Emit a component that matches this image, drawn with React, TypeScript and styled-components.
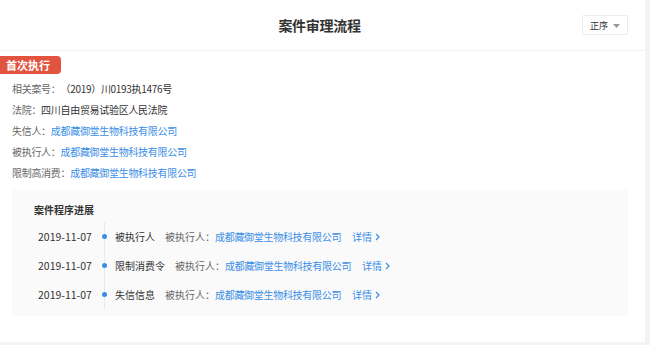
import React from 'react';
import styled, { createGlobalStyle } from 'styled-components';

const GlobalStyle = createGlobalStyle`
    body {
        margin: 0;
        background: #f2f3f5;
        font-family: "Noto Sans CJK SC", "Liberation Sans", sans-serif;
    }
`;

interface IRecord {
    date: string;
    event: string;
    party: string;
}

const records: IRecord[] = [
    { date: '2019-11-07', event: '被执行人', party: '成都藏御堂生物科技有限公司' },
    { date: '2019-11-07', event: '限制消费令', party: '成都藏御堂生物科技有限公司' },
    { date: '2019-11-07', event: '失信信息', party: '成都藏御堂生物科技有限公司' },
];

const Chevron = (): JSX.Element => (
    <svg width="5" height="8" viewBox="0 0 5 8">
        <path d="M1 1l3 3-3 3" fill="none" stroke="#3a8ee6" strokeWidth="1.2" />
    </svg>
);

const Caret = (): JSX.Element => (
    <svg width="7" height="4" viewBox="0 0 7 4">
        <path d="M0 0h7L3.5 4z" fill="#999" />
    </svg>
);

export default function App(): JSX.Element {
    return (
        <>
            <GlobalStyle />
            <Panel>
                <Header>
                    <span />
                    <Title>案件审理流程</Title>
                    <SortButton>
                        正序 <Caret />
                    </SortButton>
                </Header>
                <Tag>首次执行</Tag>
                <InfoList>
                    <InfoRow>
                        <Label>相关案号：</Label>
                        <Value>（2019）川0193执1476号</Value>
                    </InfoRow>
                    <InfoRow>
                        <Label>法院：</Label>
                        <Value>四川自由贸易试验区人民法院</Value>
                    </InfoRow>
                    <InfoRow>
                        <Label>失信人：</Label>
                        <Link>成都藏御堂生物科技有限公司</Link>
                    </InfoRow>
                    <InfoRow>
                        <Label>被执行人：</Label>
                        <Link>成都藏御堂生物科技有限公司</Link>
                    </InfoRow>
                    <InfoRow>
                        <Label>限制高消费：</Label>
                        <Link>成都藏御堂生物科技有限公司</Link>
                    </InfoRow>
                </InfoList>
                <ProgressBox>
                    <ProgressTitle>案件程序进展</ProgressTitle>
                    <Timeline>
                        {records.map((r) => (
                            <TimelineRow key={r.event}>
                                <DateCell>{r.date}</DateCell>
                                <DotCell>
                                    <Dot />
                                </DotCell>
                                <EventName>{r.event}</EventName>
                                <Label>被执行人：</Label>
                                <Link>{r.party}</Link>
                                <Detail>
                                    详情 <Chevron />
                                </Detail>
                            </TimelineRow>
                        ))}
                    </Timeline>
                </ProgressBox>
            </Panel>
        </>
    );
}

const Panel = styled.div`
    width: 645px;
    height: 342px;
    background: #fff;
    overflow: hidden;
`;

const Header = styled.div`
    display: grid;
    grid-template-columns: 1fr auto 1fr;
    align-items: center;
    height: 50px;
    border-bottom: 1px solid #f2f2f2;
`;

const Title = styled.div`
    font-size: 14px;
    font-weight: 700;
    color: #333;
    letter-spacing: -0.3px;
    margin-right: 6px;
`;

const SortButton = styled.div`
    justify-self: end;
    margin-right: 17px;
    display: flex;
    align-items: center;
    justify-content: center;
    gap: 5px;
    width: 44px;
    height: 18px;
    border: 1px solid #ececec;
    border-radius: 2px;
    font-size: 9px;
    color: #333;
    svg {
        margin-top: 1px;
    }
`;

const Tag = styled.div`
    display: inline-flex;
    align-items: center;
    margin-top: 2px;
    height: 18px;
    padding: 0 11px 0 6px;
    background: #e2543f;
    border-radius: 0 4px 4px 0;
    color: #fff;
    font-size: 11px;
    font-weight: 700;
`;

const InfoList = styled.div`
    display: flex;
    flex-direction: column;
    padding: 3px 12px 0;
`;

const InfoRow = styled.div`
    display: flex;
    align-items: center;
    height: 21px;
    font-size: 10px;
    letter-spacing: -0.3px;
`;

const Label = styled.span`
    color: #666;
    font-size: 10px;
`;

const Value = styled.span`
    color: #333;
`;

const Link = styled.span`
    color: #3a8ee6;
    font-size: 10px;
    letter-spacing: -0.3px;
`;

const ProgressBox = styled.div`
    margin: 7px 17px 0 12px;
    padding: 10px 22px 7px;
    background: #fafafa;
`;

const ProgressTitle = styled.div`
    height: 20px;
    line-height: 20px;
    font-size: 10px;
    font-weight: 700;
    color: #333;
`;

const Timeline = styled.div`
    display: flex;
    flex-direction: column;
    margin-top: 2px;
    padding-left: 4px;
`;

const TimelineRow = styled.div`
    display: flex;
    align-items: center;
    height: 29px;
    font-size: 10px;
`;

const DateCell = styled.span`
    width: 60px;
    font-size: 10.5px;
    color: #333;
`;

const DotCell = styled.span`
    position: relative;
    display: flex;
    align-items: center;
    justify-content: center;
    width: 12px;
    height: 100%;
    margin-right: 5px;
    &::before {
        content: '';
        position: absolute;
        left: 5.5px;
        top: 0;
        bottom: 0;
        width: 1px;
        background: #e1ecfa;
    }
`;

const Dot = styled.span`
    position: relative;
    width: 5px;
    height: 5px;
    border-radius: 50%;
    background: #3a8ee6;
`;

const EventName = styled.span`
    color: #333;
    margin-right: 10px;
`;

const Detail = styled.span`
    display: inline-flex;
    align-items: center;
    gap: 3px;
    margin-left: 11px;
    color: #3a8ee6;
`;
